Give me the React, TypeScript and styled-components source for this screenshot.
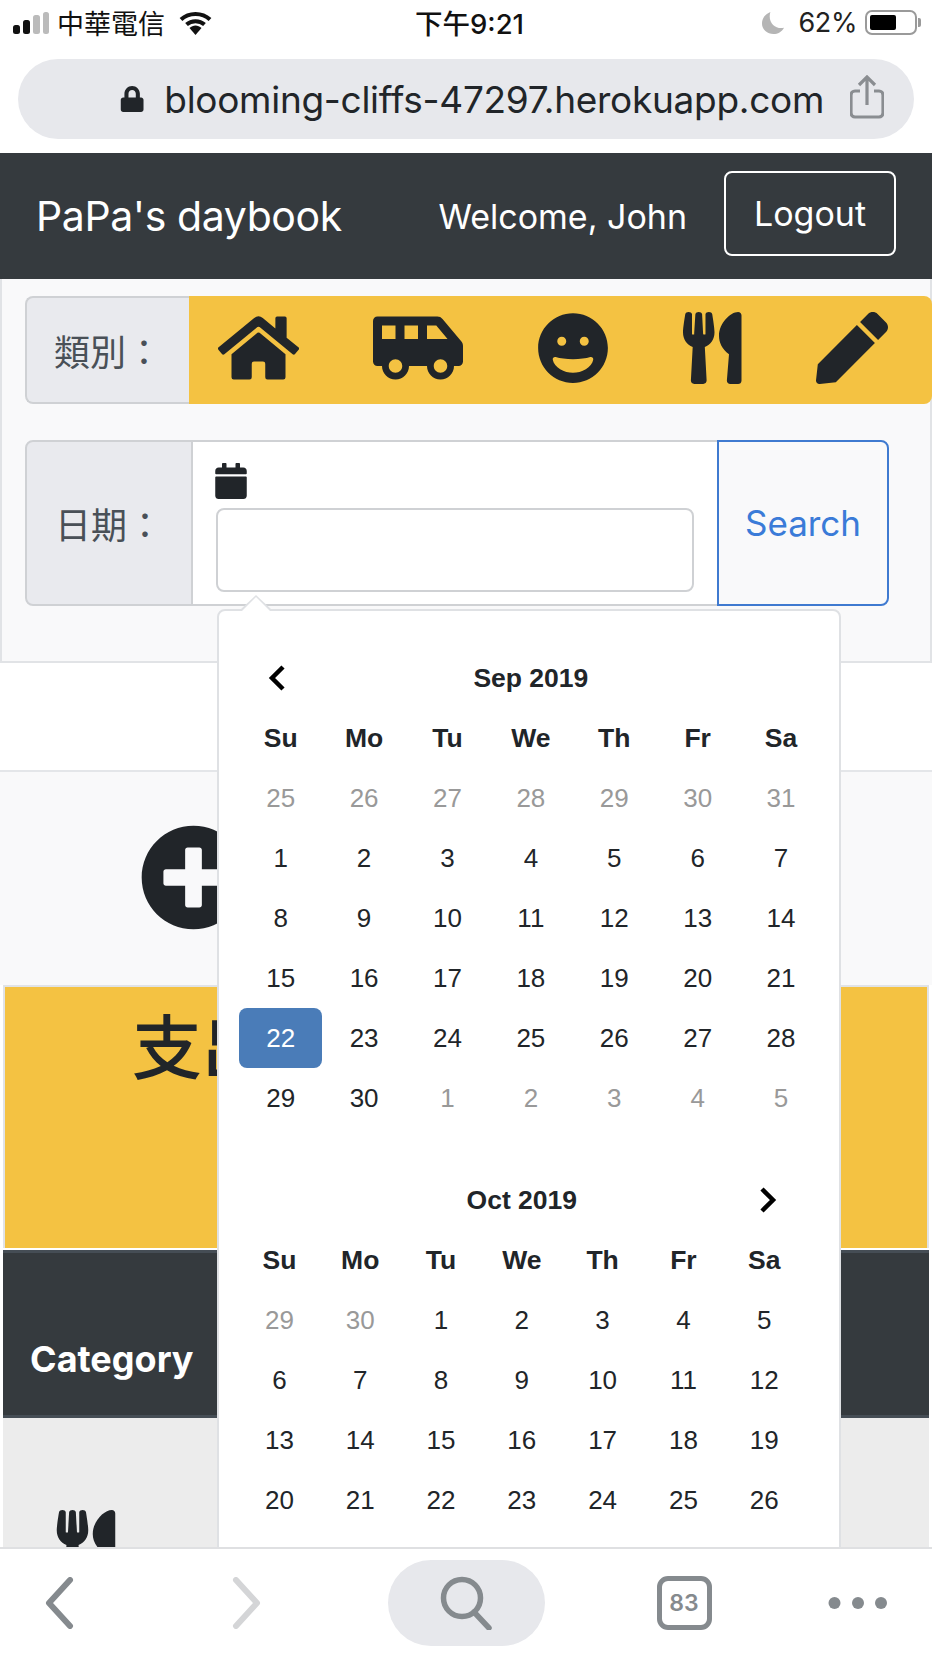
import React from "react"
import styled, { createGlobalStyle } from "styled-components"
import {
  FaCalendar,
  FaGrin,
  FaHome,
  FaLock,
  FaPen,
  FaPlusCircle,
  FaShuttleVan,
  FaUtensils,
} from "react-icons/fa"

type Day = { label: number; muted?: boolean; active?: boolean }

const range = (from: number, to: number, muted = false): Day[] => {
  const days: Day[] = []
  for (let i = from; i <= to; i++) days.push({ label: i, muted })
  return days
}

const weekdays = ["Su", "Mo", "Tu", "We", "Th", "Fr", "Sa"]

const septemberDays = [...range(25, 31, true), ...range(1, 30), ...range(1, 5, true)].map((d) =>
  d.label === 22 && !d.muted ? { ...d, active: true } : d
)
const octoberDays = [...range(29, 30, true), ...range(1, 26)]

const categories = [
  { Icon: FaHome, width: 81 },
  { Icon: FaShuttleVan, width: 90 },
  { Icon: FaGrin, width: 72 },
  { Icon: FaUtensils, width: 58.5 },
  { Icon: FaPen, width: 72 },
]

const Month: React.FC<{
  title: string
  days: Day[]
  cell: number
  prev?: boolean
  next?: boolean
}> = ({ title, days, cell, prev, next }) => (
  <MonthGrid $cell={cell}>
    <PrevArrow>
      {prev && (
        <svg width="20" height="28" viewBox="0 0 20 28">
          <path d="M16 3 L5 14 L16 25" fill="none" stroke="#000" strokeWidth="4.5" />
        </svg>
      )}
    </PrevArrow>
    <MonthTitle>{title}</MonthTitle>
    <NextArrow>
      {next && (
        <svg width="20" height="28" viewBox="0 0 20 28">
          <path d="M4 3 L15 14 L4 25" fill="none" stroke="#000" strokeWidth="4.5" />
        </svg>
      )}
    </NextArrow>
    {weekdays.map((w) => (
      <Weekday key={w}>{w}</Weekday>
    ))}
    {days.map((d, i) => (
      <DayCell key={i} $muted={d.muted} $active={d.active}>
        {d.label}
      </DayCell>
    ))}
  </MonthGrid>
)

const App: React.FC = () => {
  return (
    <Phone>
      <GlobalStyle />
      <StatusBar>
        <StatusLeft>
          <svg width="36" height="22" viewBox="0 0 36 22">
            <rect x="0" y="13" width="7" height="9" rx="2.5" fill="#111" />
            <rect x="10" y="8" width="7" height="14" rx="2.5" fill="#111" />
            <rect x="20" y="3" width="7" height="19" rx="2.5" fill="#bbb" />
            <rect x="30" y="0" width="6" height="22" rx="2.5" fill="#bbb" />
          </svg>
          <Carrier>中華電信</Carrier>
          <svg width="33" height="24" viewBox="0 0 33 24">
            <path d="M2 8.5 C10 1 23 1 31 8.5" fill="none" stroke="#111" strokeWidth="4" />
            <path d="M7.5 13.5 C12.5 9 20.5 9 25.5 13.5" fill="none" stroke="#111" strokeWidth="4" />
            <path d="M10.5 17 C14 13.5 19 13.5 22.5 17 L16.5 24 Z" fill="#111" />
          </svg>
        </StatusLeft>
        <StatusTime>下午9:21</StatusTime>
        <StatusRight>
          <svg width="22" height="22" viewBox="0 0 21 21">
            <path d="M8 0 C3 2 0 6 0 11 C0 17 5 21 11 21 C15 21 19 19 21 15 C13 17 5 10 8 0 Z" fill="#b5b5b5" />
          </svg>
          <Percent>62%</Percent>
          <BatteryShell>
            <BatteryLevel />
          </BatteryShell>
          <BatteryNub />
        </StatusRight>
      </StatusBar>

      <UrlRow>
        <UrlPill>
          <FaLock size={26} color="#212529" />
          <UrlText>blooming-cliffs-47297.herokuapp.com</UrlText>
          <ShareIcon width="34" height="44" viewBox="0 0 34 44">
            <path d="M10 16 H5 a4 4 0 0 0 -4 4 V38 a4 4 0 0 0 4 4 H29 a4 4 0 0 0 4 -4 V20 a4 4 0 0 0 -4 -4 H24" fill="none" stroke="#8a8d91" strokeWidth="3.2" />
            <path d="M17 30 V2 M9 10 L17 2 L25 10" fill="none" stroke="#8a8d91" strokeWidth="3.2" />
          </ShareIcon>
        </UrlPill>
      </UrlRow>

      <Navbar>
        <Brand>PaPa's daybook</Brand>
        <NavRight>
          <Welcome>Welcome, John</Welcome>
          <LogoutButton>Logout</LogoutButton>
        </NavRight>
      </Navbar>

      <Content>
        <FilterPanel>
          <CategoryRow>
            <Addon>類別：</Addon>
            <CategoryIcons>
              {categories.map(({ Icon, width }, i) => (
                <IconSlot key={i} $width={width}>
                  <Icon />
                </IconSlot>
              ))}
            </CategoryIcons>
          </CategoryRow>
          <DateRow>
            <DateAddon>日期：</DateAddon>
            <DateField>
              <FaCalendar size={36} color="#212529" />
              <DateInput />
            </DateField>
            <SearchButton>Search</SearchButton>
          </DateRow>
        </FilterPanel>

        <AddSection>
          <FaPlusCircle size={107} color="#212529" />
        </AddSection>

        <SummaryCard>支出</SummaryCard>

        <TableHead>Category</TableHead>
        <TableRow>
          <FaUtensils size={72} color="#212529" />
        </TableRow>

        <Picker>
          <Month title="Sep 2019" days={septemberDays} cell={83.4} prev />
          <Month title="Oct 2019" days={octoberDays} cell={80.8} next />
        </Picker>
      </Content>

      <BottomBar>
        <svg width="30" height="52" viewBox="0 0 30 52">
          <path d="M26 3 L5 26 L26 49" fill="none" stroke="#858a8e" strokeWidth="6" strokeLinecap="round" strokeLinejoin="round" />
        </svg>
        <svg width="30" height="52" viewBox="0 0 30 52">
          <path d="M4 3 L25 26 L4 49" fill="none" stroke="#d4d5d7" strokeWidth="6" strokeLinecap="round" strokeLinejoin="round" />
        </svg>
        <SearchPill>
          <svg width="52" height="54" viewBox="0 0 52 54">
            <circle cx="22" cy="22" r="18.5" fill="none" stroke="#858a8e" strokeWidth="5.5" />
            <path d="M34 36 L49 52" fill="none" stroke="#858a8e" strokeWidth="5.5" strokeLinecap="round" />
          </svg>
        </SearchPill>
        <TabCount>83</TabCount>
        <svg width="60" height="14" viewBox="0 0 60 14">
          <circle cx="6.5" cy="7" r="6" fill="#858a8e" />
          <circle cx="30" cy="7" r="6" fill="#858a8e" />
          <circle cx="53" cy="7" r="6" fill="#858a8e" />
        </svg>
      </BottomBar>
    </Phone>
  )
}

export default App

const GlobalStyle = createGlobalStyle`
  * {
    box-sizing: border-box;
  }
  body {
    margin: 0;
    background: #fff;
    color: #212529;
    font-family: Inter, "Noto Sans CJK TC", sans-serif;
  }
`

const Phone = styled.div`
  width: 932px;
  height: 1656px;
  display: flex;
  flex-direction: column;
  overflow: hidden;
`

const StatusBar = styled.div`
  height: 48px;
  flex: none;
  display: flex;
  align-items: center;
  justify-content: space-between;
  padding: 0 11px 3px 13px;
`

const StatusLeft = styled.div`
  display: flex;
  align-items: center;
  gap: 8px;
  width: 300px;
`

const Carrier = styled.span`
  font-size: 27px;
  margin-right: 6px;
  color: #111;
  font-family: "Noto Sans CJK TC", sans-serif;
`

const StatusTime = styled.span`
  font-size: 27.5px;
  font-weight: 500;
  color: #111;
  font-family: Inter, "Noto Sans CJK TC", sans-serif;
  margin: 0 0 2px 5px;
`

const StatusRight = styled.div`
  display: flex;
  align-items: center;
  justify-content: flex-end;
  width: 300px;
`

const Percent = styled.span`
  font-size: 27px;
  letter-spacing: -0.4px;
  color: #222;
  margin: 0 8px 0 14px;
`

const BatteryShell = styled.div`
  width: 52px;
  height: 25px;
  border: 2px solid #9a9a9a;
  border-radius: 7px;
  padding: 3px;
`

const BatteryLevel = styled.div`
  width: 62%;
  height: 100%;
  background: #000;
  border-radius: 2px;
`

const BatteryNub = styled.div`
  width: 3px;
  height: 9px;
  margin-left: 1px;
  background: #9a9a9a;
  border-radius: 0 2px 2px 0;
`

const UrlRow = styled.div`
  height: 105px;
  flex: none;
  padding: 11px 18px 14px;
`

const UrlPill = styled.div`
  height: 80px;
  background: #e7e8ec;
  border-radius: 40px;
  display: flex;
  align-items: center;
  padding: 0 30px 0 102px;
`

const UrlText = styled.span`
  font-size: 37px;
  letter-spacing: -0.29px;
  margin: 0 26px 0 20px;
  white-space: nowrap;
  color: #212529;
`

const ShareIcon = styled.svg`
  flex: none;
  margin-bottom: 5px;
`

const Navbar = styled.div`
  height: 126px;
  flex: none;
  background: #353a3e;
  color: #fff;
  display: flex;
  align-items: center;
  justify-content: space-between;
  padding: 0 36px 0 36px;
`

const Brand = styled.div`
  font-size: 41px;
  letter-spacing: -0.4px;
`

const NavRight = styled.div`
  display: flex;
  align-items: center;
  gap: 37px;
`

const Welcome = styled.span`
  font-size: 34px;
`

const LogoutButton = styled.button`
  width: 172px;
  height: 85px;
  margin-bottom: 6px;
  background: transparent;
  border: 2px solid #fff;
  border-radius: 8px;
  color: #fff;
  font: inherit;
  font-size: 34px;
`

const Content = styled.div`
  flex: 1;
  position: relative;
  overflow: hidden;
`

const FilterPanel = styled.div`
  height: 384px;
  background: #f9f9fa;
  border: 2px solid #e1e3e6;
  border-top: none;
  padding: 17px 0 0 23px;
`

const CategoryRow = styled.div`
  display: flex;
  height: 108px;
  margin-right: -2px;
`

const Addon = styled.div`
  width: 164px;
  flex: none;
  background: #e9eaee;
  border: 2px solid #cfd1d4;
  border-right: none;
  border-radius: 8px 0 0 8px;
  color: #495057;
  font-size: 36px;
  font-family: "Noto Sans CJK TC", sans-serif;
  display: flex;
  align-items: center;
  justify-content: center;
`

const DateAddon = styled(Addon)`
  width: 168px;
  border-right: 2px solid #cfd1d4;
`

const CategoryIcons = styled.div`
  flex: 1;
  background: #f4c242;
  border-radius: 0 8px 8px 0;
  color: #212529;
  display: flex;
  align-items: center;
  gap: 74px;
  padding: 0 0 5px 29px;
`

const IconSlot = styled.span<{ $width: number }>`
  display: flex;
  flex: none;
  width: ${(p) => p.$width}px;
  height: 72px;
  & > svg {
    width: 100%;
    height: 100%;
  }
`

const DateRow = styled.div`
  display: flex;
  height: 166px;
  margin-top: 36px;
  width: 864px;
`

const DateField = styled.div`
  width: 524px;
  flex: none;
  background: #fff;
  border: 2px solid #cfd1d4;
  border-left: none;
  border-right: none;
  padding: 21px 23px 0 23px;
  display: flex;
  flex-direction: column;
  align-items: flex-start;
  gap: 9px;
  & > svg {
    margin-left: -3px;
  }
`

const DateInput = styled.input`
  width: 478px;
  height: 84px;
  flex: none;
  background: #fff;
  border: 2px solid #cfd1d4;
  border-radius: 8px;
`

const SearchButton = styled.button`
  flex: 1;
  background: #f9f9fa;
  border: 2px solid #3f7ad0;
  border-radius: 0 8px 8px 0;
  color: #3a7bd8;
  font: inherit;
  font-size: 35px;
`

const AddSection = styled.div`
  height: 215px;
  margin-top: 107px;
  background: #f9f9fa;
  border-top: 2px solid #e4e6e9;
  display: flex;
  align-items: center;
  padding: 0 0 2px 140px;
`

const SummaryCard = styled.div`
  height: 263px;
  margin: 0 3px;
  background: #f4c242;
  border: 2px solid #e1e3e6;
  border-bottom: none;
  padding-left: 127px;
  font-size: 70px;
  font-weight: 500;
  line-height: 113px;
  color: #212529;
  font-family: "Noto Sans CJK TC", sans-serif;
`

const TableHead = styled.div`
  height: 168px;
  margin: 2px 3px 0;
  background: #353a3e;
  border-top: 3px solid #454d55;
  border-bottom: 3px solid #454d55;
  color: #fff;
  font-size: 36px;
  font-weight: 700;
  display: flex;
  align-items: flex-end;
  padding: 0 0 34px 27px;
`

const TableRow = styled.div`
  height: 200px;
  margin: 0 3px;
  background: #ececec;
  padding: 92px 0 0 47px;
`

const Picker = styled.div`
  position: absolute;
  top: 330px;
  left: 217px;
  width: 624px;
  height: 1000px;
  background: #fff;
  border: 2px solid #dfe1e4;
  border-radius: 8px;
  padding: 37px 0 0 20px;
  display: flex;
  flex-direction: column;
  gap: 42px;
  font-family: "Liberation Sans", Arial, sans-serif;
  color: #212529;

  &::before {
    content: "";
    position: absolute;
    top: -16px;
    left: 21px;
    border-left: 16px solid transparent;
    border-right: 16px solid transparent;
    border-bottom: 15px solid #dfe1e4;
  }
  &::after {
    content: "";
    position: absolute;
    top: -14px;
    left: 23px;
    border-left: 14px solid transparent;
    border-right: 14px solid transparent;
    border-bottom: 14px solid #fff;
  }
`

const MonthGrid = styled.div<{ $cell: number }>`
  display: grid;
  grid-template-columns: repeat(7, ${(p) => p.$cell}px);
  grid-auto-rows: 60px;
  width: max-content;
`

const PrevArrow = styled.div`
  display: flex;
  align-items: center;
  justify-content: center;
  padding-right: 8px;
`

const NextArrow = styled.div`
  display: flex;
  align-items: center;
  justify-content: center;
  padding-left: 8px;
`

const MonthTitle = styled.div`
  grid-column: span 5;
  display: flex;
  align-items: center;
  justify-content: center;
  font-size: 26.5px;
  font-weight: 700;
`

const Weekday = styled.div`
  display: flex;
  align-items: center;
  justify-content: center;
  font-size: 26.5px;
  font-weight: 700;
`

const DayCell = styled.div<{ $muted?: boolean; $active?: boolean }>`
  display: flex;
  align-items: center;
  justify-content: center;
  font-size: 26px;
  border-radius: 8px;
  color: ${(p) => (p.$active ? "#fff" : p.$muted ? "#999" : "#212529")};
  background: ${(p) => (p.$active ? "#4a7cb8" : "transparent")};
`

const BottomBar = styled.div`
  height: 109px;
  flex: none;
  background: #fff;
  border-top: 2px solid #dfe0e2;
  display: grid;
  grid-template-columns: 118px 258px 180px 256px 92px;
  align-items: center;
  justify-items: center;
`

const SearchPill = styled.div`
  width: 157px;
  height: 86px;
  background: #e7e8ec;
  border-radius: 43px;
  display: flex;
  align-items: center;
  justify-content: center;
`

const TabCount = styled.div`
  width: 55px;
  height: 54px;
  border: 5px solid #858a8e;
  border-radius: 11px;
  color: #858a8e;
  font-size: 23px;
  font-weight: 600;
  display: flex;
  align-items: center;
  justify-content: center;
`
